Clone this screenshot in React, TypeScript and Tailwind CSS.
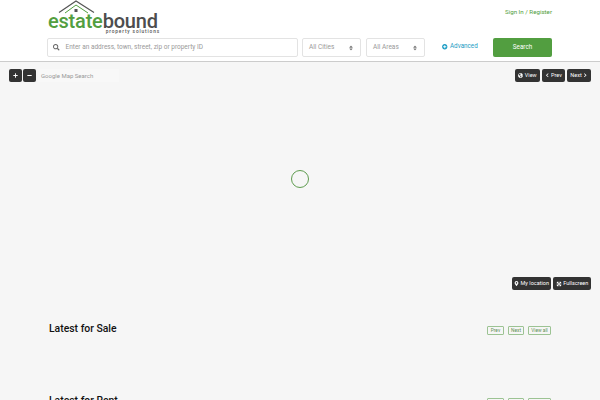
import { FaArrowsAlt, FaChevronLeft, FaChevronRight, FaGlobeAmericas, FaMapMarkerAlt, FaMinus, FaPlus, FaPlusCircle, FaSearch, FaSort } from 'react-icons/fa';

const mapButton = 'flex h-[13px] items-center justify-center gap-[1.5px] rounded-[2px] bg-[#333333] text-[5.5px] whitespace-nowrap text-white';

function SelectBox({ label }: { label: string }) {
  return (
    <div className="flex h-[19px] w-[59px] items-center justify-between rounded-[2px] border border-[#e3e3e3] bg-white pl-[6px] pr-[6px] text-[6.5px] text-[#999999]">
      <span>{label}</span>
      <FaSort className="h-[6px] w-[6px] text-[#777777]" />
    </div>
  );
}

function Section({ title }: { title: string }) {
  return (
    <div className="flex h-[72px] shrink-0 items-start justify-between pl-[49px] pr-[49px] pt-[22px]">
      <h2 className="text-[10.4px] font-medium leading-[14px] text-[#111111]">{title}</h2>
      <div className="flex gap-[4px] pt-[4px]">
        {[
          { label: 'Prev', w: 'w-[17px]' },
          { label: 'Next', w: 'w-[16px]' },
          { label: 'View all', w: 'w-[23px]' },
        ].map((b) => (
          <button
            key={b.label}
            className={`${b.w} flex h-[9px] items-center justify-center rounded-[1px] border border-[#9cc393] text-[4.8px] whitespace-nowrap text-[#5f8f55]`}
          >
            {b.label}
          </button>
        ))}
      </div>
    </div>
  );
}

export default function App() {
  return (
    <div className="flex h-[400px] w-[600px] flex-col overflow-hidden bg-[#f6f6f6] font-['Roboto',sans-serif]">
      {/* Header */}
      <header className="h-[62px] shrink-0 border-b border-[#cccccc] bg-white">
        <div className="flex h-[38px] items-start justify-between pl-[48px] pr-[48px]">
          <div className="relative w-[112px]">
            {/* house roof */}
            <svg viewBox="0 0 40 14" className="absolute left-[10px] top-0 h-[14px] w-[40px]" fill="none">
              <path d="M1 12.5 L18 1 L36 12.5" stroke="#555555" strokeWidth="1.2" />
              <path d="M7 13 L18 5 L30 13" stroke="#529e40" strokeWidth="1" />
              <rect x="16.5" y="9" width="3" height="3" fill="#555555" />
            </svg>
            <div className="absolute left-0 top-[13px] text-[20px] font-medium leading-[16px] tracking-[-0.2px]">
              <span className="text-[#529e40]">estate</span>
              <span className="text-[#4d4d4d]">bound</span>
            </div>
            <div className="absolute right-0 top-[29px] text-[4.8px] font-medium leading-[5px] tracking-[0.85px] whitespace-nowrap text-[#555555]">
              property solutions
            </div>
          </div>
          <a className="pt-[8px] text-[6.2px] leading-[9px] text-[#529e40]">Sign In / Register</a>
        </div>
        <div className="flex items-center pl-[47px]">
          <div className="flex h-[19px] w-[251px] items-center gap-[6px] rounded-[2px] border border-[#e3e3e3] bg-white pl-[5px] text-[6.5px] text-[#999999]">
            <FaSearch className="h-[6.5px] w-[6.5px] text-[#666666]" />
            <span>Enter an address, town, street, zip or property ID</span>
          </div>
          <div className="ml-[4px] flex gap-[5px]">
            <SelectBox label="All Cities" />
            <SelectBox label="All Areas" />
          </div>
          <div className="ml-[17px] flex w-[51px] items-center gap-[2.5px] pb-[1px] text-[6.3px] text-[#1a9cc4]">
            <FaPlusCircle className="h-[5.5px] w-[5.5px]" />
            <span>Advanced</span>
          </div>
          <button className="flex h-[19px] w-[59px] items-center justify-center rounded-[2px] bg-[#529e40] text-[6.3px] text-white">
            Search
          </button>
        </div>
      </header>

      {/* Map */}
      <div className="relative h-[238px] shrink-0">
        <div className="absolute left-[9px] top-[7px] flex items-center gap-[1.5px]">
          <button className={`${mapButton} w-[12.5px]`}>
            <FaPlus className="h-[5px] w-[5px]" />
          </button>
          <button className={`${mapButton} w-[12.5px]`}>
            <FaMinus className="h-[5px] w-[5px]" />
          </button>
          <div className="ml-[1px] flex h-[13px] w-[81px] items-center bg-[#f8f8f8] pl-[3px] text-[6px] text-[#999999]">
            Google Map Search
          </div>
        </div>
        <div className="absolute right-[9px] top-[7px] flex gap-[2px]">
          <button className={`${mapButton} w-[25px]`}>
            <FaGlobeAmericas className="h-[5px] w-[5px]" />
            View
          </button>
          <button className={`${mapButton} w-[23px]`}>
            <FaChevronLeft className="h-[4.5px] w-[4.5px]" />
            Prev
          </button>
          <button className={`${mapButton} w-[24px]`}>
            Next
            <FaChevronRight className="h-[4.5px] w-[4.5px]" />
          </button>
        </div>
        <div className="absolute left-[291px] top-[108px] h-[18px] w-[18px] rounded-full border border-[#5f9c50]" />
        <div className="absolute bottom-[10px] right-[9px] flex gap-[2px]">
          <button className={`${mapButton} w-[39px]`}>
            <FaMapMarkerAlt className="h-[5px] w-[5px]" />
            My location
          </button>
          <button className={`${mapButton} w-[38px]`}>
            <FaArrowsAlt className="h-[6px] w-[6px] rotate-45" />
            Fullscreen
          </button>
        </div>
      </div>

      <Section title="Latest for Sale" />
      <Section title="Latest for Rent" />
    </div>
  );
}
